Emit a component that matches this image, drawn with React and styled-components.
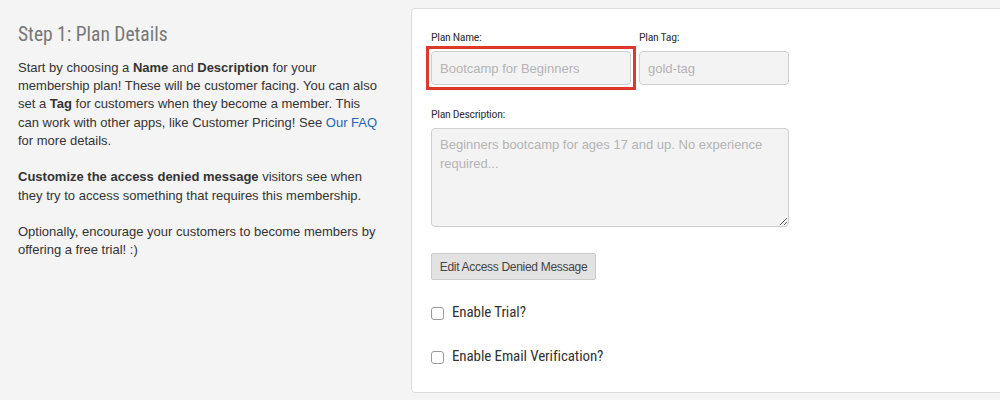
import React from "react";
import styled, { createGlobalStyle } from "styled-components";

const Global = createGlobalStyle`
  html, body { margin: 0; padding: 0; background: #f4f4f4; overflow: hidden; }
  body { font-family: "Liberation Sans", Arial, sans-serif; }
  * { box-sizing: border-box; }
`;

const narrow = `"Roboto Condensed", "Liberation Sans Narrow", "DejaVu Sans Condensed", sans-serif`;

const Page = styled.div`
  display: grid;
  grid-template-columns: 366px 620px;
  column-gap: 27px;
  padding: 8px 0 0 18px;
  width: 1100px;
  height: 400px;
`;

const Intro = styled.div`
  padding-top: 14px;
`;

const Heading = styled.h2`
  margin: 0 0 11px;
  font-family: ${narrow};
  font-weight: normal;
  font-size: 19.5px;
  line-height: 26px;
  color: #777;
`;

const Para = styled.p`
  margin: 0 0 18.3px;
  font-size: 13px;
  line-height: 18.2px;
  color: #333;
`;

const Link = styled.a`
  color: #2466ad;
  text-decoration: none;
`;

const Panel = styled.section`
  background: #fff;
  border: 1px solid #dcdcdc;
  border-radius: 4px;
  height: 385px;
  padding: 21px 19px 0;
  display: flex;
  flex-direction: column;
  align-items: flex-start;
`;

const Row = styled.div`
  display: flex;
  gap: 8px;
`;

const Field = styled.div`
  display: flex;
  flex-direction: column;
  align-items: flex-start;
`;

const Label = styled.label`
  font-family: ${narrow};
  font-size: 11.8px;
  letter-spacing: -0.3px;
  line-height: 14px;
  color: #333;
  margin-bottom: 7px;
`;

const Highlight = styled.span`
  display: inline-flex;
  padding: 2px;
  margin: -5px;
  border: 3px solid #e0372c;
`;

const Input = styled.input`
  width: ${(p) => p.$w}px;
  height: 34px;
  padding: 0 8px;
  background: #f3f3f3;
  border: 1px solid #cfcfcf;
  border-radius: 4px;
  font-family: "Liberation Sans", Arial, sans-serif;
  font-size: 13px;
  color: #555;
  outline: none;
  &::placeholder { color: #b4b4b4; }
`;

const TextArea = styled.textarea`
  width: 358px;
  height: 99px;
  padding: 7px 8px;
  background: #f3f3f3;
  border: 1px solid #cfcfcf;
  border-radius: 4px;
  font-family: "Liberation Sans", Arial, sans-serif;
  font-size: 13px;
  line-height: 18.5px;
  color: #555;
  outline: none;
  &::placeholder { color: #b4b4b4; }
`;

const Spacer = styled.div`
  height: ${(p) => p.$h}px;
  flex-shrink: 0;
`;

const Button = styled.button`
  height: 27px;
  padding: 0 7px;
  background: #e2e2e2;
  border: 1px solid #cbcbcb;
  border-radius: 2px;
  font-family: "Liberation Sans", Arial, sans-serif;
  font-size: 12px;
  letter-spacing: -0.3px;
  color: #444;
  width: 165px;
`;

const CheckRow = styled.label`
  display: flex;
  align-items: center;
  gap: 8px;
  height: 20px;
`;

const Check = styled.input.attrs({ type: "checkbox" })`
  appearance: none;
  margin: 2px 0 0;
  width: 13px;
  height: 13px;
  border: 1px solid #9a9a9a;
  border-radius: 3px;
  background: #fff;
`;

const CheckText = styled.span`
  font-family: ${narrow};
  font-size: 15px;
  letter-spacing: -0.1px;
  color: #333;
`;

export default function App() {
  return (
    <>
      <Global />
      <Page>
        <Intro>
          <Heading>Step 1: Plan Details</Heading>
          <Para>
            Start by choosing a <b>Name</b> and <b>Description</b> for your
            membership plan! These will be customer facing. You can also set a{" "}
            <b>Tag</b> for customers when they become a member. This can work
            with other apps, like Customer Pricing! See <Link href="#">Our FAQ</Link>{" "}
            for more details.
          </Para>
          <Para>
            <b>Customize the access denied message</b> visitors see when they
            try to access something that requires this membership.
          </Para>
          <Para>
            Optionally, encourage your customers to become members by offering
            a free trial! :)
          </Para>
        </Intro>
        <Panel>
          <Row>
            <Field>
              <Label>Plan Name:</Label>
              <Highlight>
                <Input $w={200} placeholder="Bootcamp for Beginners" />
              </Highlight>
            </Field>
            <Field>
              <Label>Plan Tag:</Label>
              <Input $w={150} placeholder="gold-tag" />
            </Field>
          </Row>
          <Spacer $h={22} />
          <Field>
            <Label>Plan Description:</Label>
            <TextArea placeholder="Beginners bootcamp for ages 17 and up. No experience required..." />
          </Field>
          <Spacer $h={26} />
          <Button>Edit Access Denied Message</Button>
          <Spacer $h={22} />
          <CheckRow>
            <Check />
            <CheckText>Enable Trial?</CheckText>
          </CheckRow>
          <Spacer $h={24} />
          <CheckRow>
            <Check />
            <CheckText>Enable Email Verification?</CheckText>
          </CheckRow>
        </Panel>
      </Page>
    </>
  );
}
